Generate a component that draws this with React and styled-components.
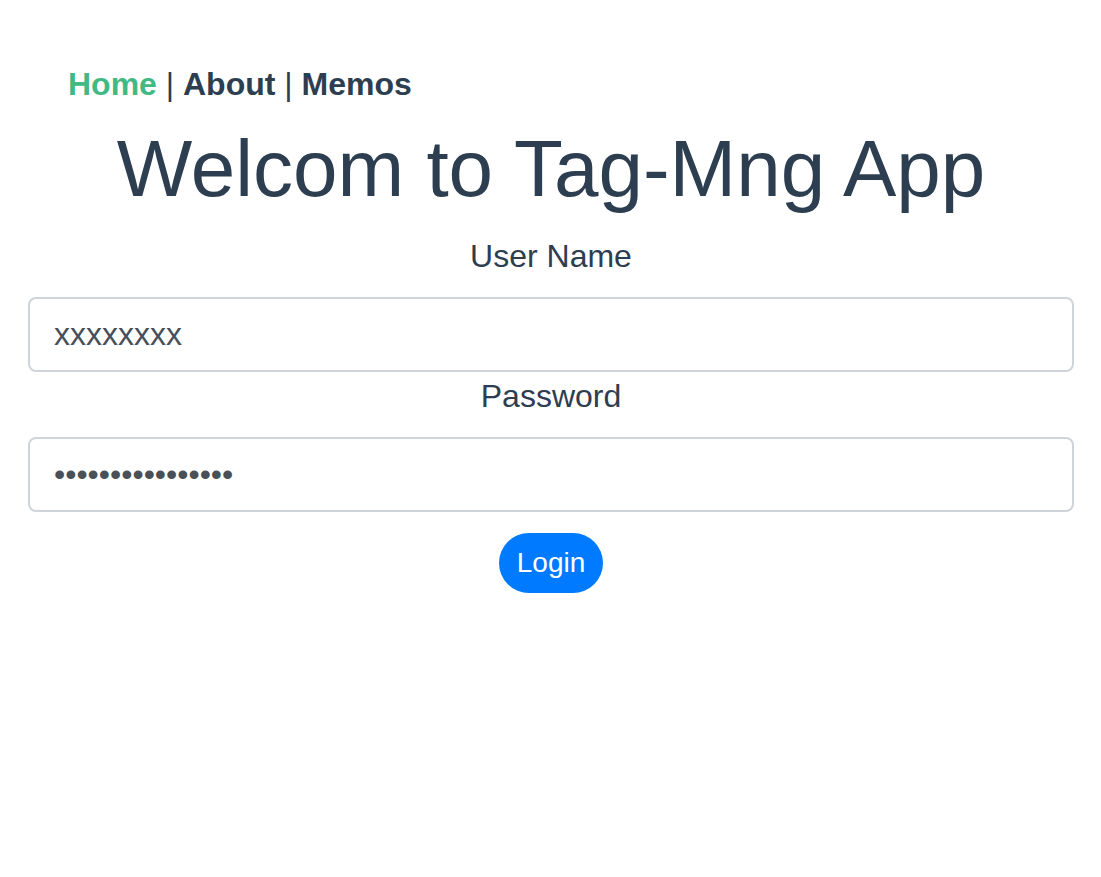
import React from "react";
import styled, { createGlobalStyle } from "styled-components";

const GlobalStyle = createGlobalStyle`
  html, body {
    margin: 0;
    padding: 0;
    background: #ffffff;
  }
  body {
    font-family: "Liberation Sans", Arial, Helvetica, sans-serif;
    color: #2c3e50;
    -webkit-font-smoothing: antialiased;
  }
`;

const Page = styled.div`
  padding: 0 27px 0 28px;
  display: flex;
  flex-direction: column;
`;

const Nav = styled.nav`
  padding: 66px 0 0 40px;
  font-size: 32px;
  line-height: 36px;
  color: #2c3e50;
  white-space: pre;
`;

const NavLink = styled.a`
  font-weight: bold;
  text-decoration: none;
  color: ${(p) => (p.$active ? "#42b983" : "#2c3e50")};
  cursor: pointer;
`;

const Title = styled.h1`
  margin: 19px 0 0;
  font-size: 80px;
  line-height: 96px;
  font-weight: normal;
  text-align: center;
  color: #2c3e50;
`;

const Form = styled.form`
  display: flex;
  flex-direction: column;
  align-items: stretch;
  margin: 0;
`;

const Label = styled.label`
  display: block;
  margin-top: ${(p) => p.$top}px;
  font-size: 32px;
  line-height: 48px;
  text-align: center;
  color: #2c3e50;
`;

const Input = styled.input`
  display: block;
  box-sizing: border-box;
  width: 100%;
  height: 75px;
  margin: 17px 0 0;
  padding: 0 24px;
  border: 2px solid #ced4da;
  border-radius: 8px;
  background: #ffffff;
  font-family: "Liberation Sans", Arial, sans-serif;
  font-size: 32px;
  color: #495057;
  outline: none;
`;

const ButtonRow = styled.div`
  display: flex;
  justify-content: center;
  margin-top: 21px;
`;

const Button = styled.button`
  height: 60px;
  padding: 0 18px;
  border: none;
  border-radius: 30px;
  background: #007bff;
  color: #ffffff;
  font-family: "Liberation Sans", Arial, sans-serif;
  font-size: 28px;
  line-height: 60px;
  cursor: pointer;
`;

export default function App() {
  return (
    <>
      <GlobalStyle />
      <Page>
        <Nav>
          <NavLink $active>Home</NavLink>
          {" | "}
          <NavLink>About</NavLink>
          {" | "}
          <NavLink>Memos</NavLink>
        </Nav>
        <Title>Welcom to Tag-Mng App</Title>
        <Form onSubmit={(e) => e.preventDefault()}>
          <Label $top={15} htmlFor="username">User Name</Label>
          <Input id="username" type="text" defaultValue="xxxxxxxx" />
          <Label $top={0} htmlFor="password">Password</Label>
          <Input id="password" type="password" defaultValue="xxxxxxxxxxxxxxxx" />
          <ButtonRow>
            <Button type="submit">Login</Button>
          </ButtonRow>
        </Form>
      </Page>
    </>
  );
}
